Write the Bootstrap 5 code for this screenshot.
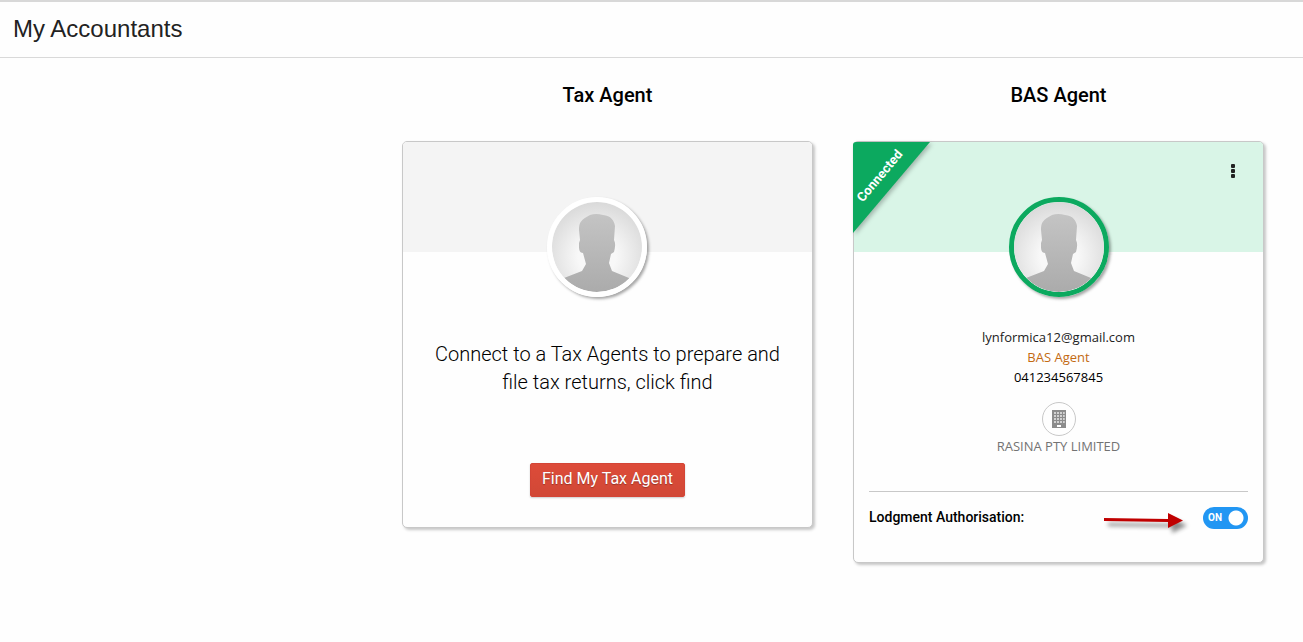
<!DOCTYPE html>
<html lang="en">
<head>
<meta charset="utf-8">
<meta name="viewport" content="width=device-width, initial-scale=1">
<title>My Accountants</title>
<link href="https://cdn.jsdelivr.net/npm/bootstrap@5.3.0/dist/css/bootstrap.min.css" rel="stylesheet">
<style>
  body { font-family: Roboto, "Liberation Sans", sans-serif; color: #000; background: #fefefe; }
  .page-head { border-top: 2px solid #d8d8d8; border-bottom: 1px solid #d9d9d9; padding: 11px 13px 12px; }
  .page-head h1 { font: 24px/32px "Liberation Sans", Arial, sans-serif; color: #222; }
  .agents { display: grid; gap: 40px; padding: 22px 39px 40px 0; align-items: start; }
  @media (max-width: 991px) { .agents { padding-left: 39px; } }
  @media (min-width: 992px) { .agents { grid-template-columns: 362fr 411fr 411fr; } .agents section:first-child { grid-column-start: 2; } }
  .agents h2 { font-size: 20px; line-height: 30px; font-weight: 500; margin-bottom: 31px; }
  .agent-card { border: 1px solid #c8c8c8; border-radius: 5px; box-shadow: 2px 2px 3px rgba(0,0,0,.22); background: #fefefe; }
  .banner { height: 110px; background: #f4f4f4; border-radius: 4px 4px 0 0; padding-top: 55px; }
  .connected .banner { background: #d9f5e7; }
  .unassigned .banner { padding-right: 22px; }
  .avatar { width: 100px; height: 100px; border: 5px solid #fff; border-radius: 50%; box-shadow: 2px 2px 3px rgba(0,0,0,.35); display: block; flex: none; }
  .connected .avatar { border-color: #0ca95f; }
  .invite { font-size: 20px; line-height: 28px; font-weight: 300; padding: 88px 24px 0; margin-bottom: 67px; }
  .btn-find { --bs-btn-color: #fff; --bs-btn-hover-color: #fff; font-size: 16px; line-height: 22px; padding: 4px 11px 6px; border: 1px solid #d34536; border-radius: 2px; background: linear-gradient(#dd4b39, #d14836); text-shadow: 0 1px 1px rgba(0,0,0,.3); box-shadow: 0 1px 2px rgba(0,0,0,.2); margin-bottom: 30px; }
  .ribbon { top: 0; left: -1px; width: 90px; height: 100px; }
  .ribbon svg { display: block; filter: drop-shadow(2px 2px 2px rgba(0,0,0,.25)); }
  .ribbon span { position: absolute; left: 27px; top: 34px; font-size: 13px; line-height: 16px; font-weight: 700; color: #fff; transform: translate(-50%, -50%) rotate(-50deg); }
  .menu-btn { top: 18px; right: 20px; width: 20px; height: 22px; }
  .details { font-family: "Open Sans", "Noto Sans", sans-serif; font-size: 13px; line-height: 20px; padding-top: 75px; }
  .details a { color: #222; }
  .role { color: #c36a12; }
  .company-mark { width: 34px; height: 34px; border: 1px solid #c8c8c8; border-radius: 50%; margin-top: 15px; }
  .company { color: #737373; }
  .authorise { margin: 35px 15px 0; padding: 15px 0 23px; border-top: 1px solid #c8c8c8; font-size: 14px; line-height: 20px; font-weight: 500; }
  .form-check-input.toggle { width: 45px; height: 22px; margin: 0; border: 0; border-radius: 11px; background: #2196f3 radial-gradient(circle at 33px 11px, #fff 7px, transparent 8px); float: none; display: block; }
  .form-check-input.toggle:not(:checked) { background: #aaa radial-gradient(circle at 12px 11px, #fff 7px, transparent 8px); }
  .toggle-text { left: 5px; top: 1px; font-size: 10px; font-weight: 700; color: #fff; pointer-events: none; }
</style>
</head>
<body>
<svg width="0" height="0" class="position-absolute" aria-hidden="true">
  <defs>
    <radialGradient id="backdrop" cx=".5" cy=".6" r=".6"><stop offset=".35" stop-color="#f8f8f8"/><stop offset="1" stop-color="#d9d9d9"/></radialGradient>
    <linearGradient id="figure" x1="0" y1="0" x2="0" y2="1"><stop offset="0" stop-color="#c4c4c4"/><stop offset="1" stop-color="#ababab"/></linearGradient>
    <clipPath id="round"><circle cx="45" cy="45" r="45"/></clipPath>
    <symbol id="person" viewBox="0 0 90 90">
      <g clip-path="url(#round)">
        <rect width="90" height="90" fill="url(#backdrop)"/>
        <path fill="url(#figure)" d="M0 90V81L12 76L30 69L34 62L31 51C28 51 27 48 27 45V41L28 38L27 28C27 20 29 18 38 13Q44 11 51 13C59 14 62 18 63 24L62 38C64 42 63 46 62 50L59 52L57 61L60 69L77 76L90 81V90Z"/>
      </g>
    </symbol>
  </defs>
</svg>
<header class="page-head"><h1 class="m-0">My Accountants</h1></header>
<main class="agents text-center">
  <section>
    <h2>Tax Agent</h2>
    <div class="agent-card unassigned">
      <div class="banner d-flex justify-content-center"><svg class="avatar" aria-hidden="true"><use href="#person"/></svg></div>
      <p class="invite">Connect to a Tax Agents to prepare and file tax returns, click find</p>
      <button type="button" class="btn btn-find">Find My Tax Agent</button>
    </div>
  </section>
  <section>
    <h2>BAS Agent</h2>
    <div class="agent-card connected position-relative">
      <div class="banner d-flex justify-content-center"><svg class="avatar" aria-hidden="true"><use href="#person"/></svg></div>
      <div class="ribbon position-absolute">
        <svg width="90" height="100" aria-hidden="true"><path d="M0 3Q0 0 3 0H77L0 91Z" fill="#0ca95f"/></svg>
        <span>Connected</span>
      </div>
      <button type="button" class="menu-btn btn p-0 border-0 position-absolute d-flex align-items-center justify-content-center" aria-label="More options">
        <svg width="4" height="14" fill="#222"><rect width="4" height="4" rx="1"/><rect y="5" width="4" height="4" rx="1"/><rect y="10" width="4" height="4" rx="1"/></svg>
      </button>
      <div class="details d-flex flex-column align-items-center">
        <a class="text-decoration-none" href="mailto:lynformica12@gmail.com">lynformica12@gmail.com</a>
        <div class="role">BAS Agent</div>
        <div>041234567845</div>
        <div class="company-mark d-flex align-items-center justify-content-center">
          <svg width="16" height="20" viewBox="0 0 16 20" aria-hidden="true"><path fill="#8c8c8c" d="M1 1h14v18H1z"/><path stroke="#fff" stroke-width="1.6" stroke-dasharray="1.6 1.4" d="M3.2 4h10.4M3.2 7h10.4M3.2 10h10.4M3.2 13h10.4"/><path fill="#fff" d="M6 16h4v2H6z"/></svg>
        </div>
        <div class="company">RASINA PTY LIMITED</div>
      </div>
      <div class="authorise d-flex align-items-start">
        <label for="lodgment" class="me-auto">Lodgment Authorisation:</label>
        <svg class="me-2" width="92" height="32" aria-hidden="true">
          <g style="filter:drop-shadow(4px 5px 2px rgba(0,0,0,.45))" fill="#c00000"><path d="M1 11L65 12V15L1 14Z"/><path d="M65 6L80 13.500L65 21Z"/></g>
        </svg>
        <div class="position-relative">
          <input class="form-check-input toggle" type="checkbox" role="switch" id="lodgment" checked>
          <span class="toggle-text position-absolute">ON</span>
        </div>
      </div>
    </div>
  </section>
</main>
<script src="https://cdn.jsdelivr.net/npm/bootstrap@5.3.0/dist/js/bootstrap.bundle.min.js"></script>
</body>
</html>
